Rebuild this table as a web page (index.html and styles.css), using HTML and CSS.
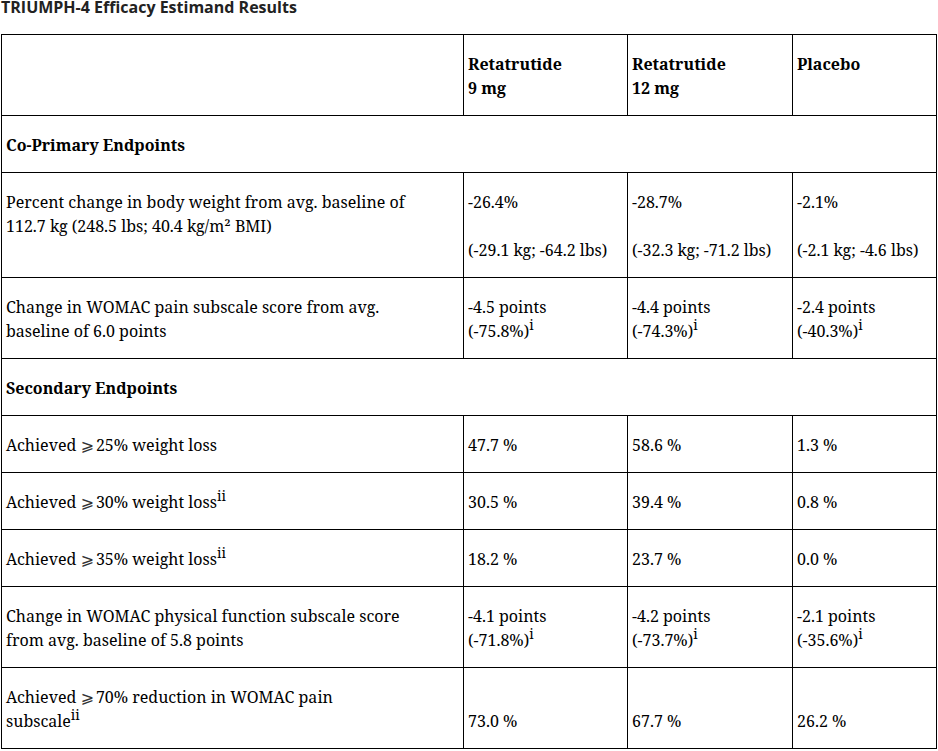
FILE: index.html
```html
<!DOCTYPE html>
<html lang="en">
<head>
<meta charset="utf-8">
<title>TRIUMPH-4 Efficacy Estimand Results</title>
<link rel="stylesheet" href="styles.css">
</head>
<body>
<h1 class="title">TRIUMPH-4 Efficacy Estimand Results</h1>
<div class="tbl" role="table">
  <div class="row head" role="row">
    <div class="cell c1" role="columnheader"></div>
    <div class="cell" role="columnheader">Retatrutide<br>9 mg</div>
    <div class="cell" role="columnheader">Retatrutide<br>12 mg</div>
    <div class="cell" role="columnheader">Placebo</div>
  </div>
  <div class="row section" role="row">
    <div class="cell" role="cell">Co-Primary Endpoints</div>
  </div>
  <div class="row" role="row">
    <div class="cell c1" role="cell">Percent change in body weight from avg. baseline of 112.7 kg (248.5 lbs; 40.4 kg/m² BMI)</div>
    <div class="cell" role="cell">-26.4%<br><br>(-29.1 kg; -64.2 lbs)</div>
    <div class="cell" role="cell">-28.7%<br><br>(-32.3 kg; -71.2 lbs)</div>
    <div class="cell" role="cell">-2.1%<br><br>(-2.1 kg; -4.6 lbs)</div>
  </div>
  <div class="row" role="row">
    <div class="cell c1" role="cell">Change in WOMAC pain subscale score from avg. baseline of 6.0 points</div>
    <div class="cell" role="cell">-4.5 points<br>(-75.8%)<sup>i</sup></div>
    <div class="cell" role="cell">-4.4 points<br>(-74.3%)<sup>i</sup></div>
    <div class="cell" role="cell">-2.4 points<br>(-40.3%)<sup>i</sup></div>
  </div>
  <div class="row section" role="row">
    <div class="cell" role="cell">Secondary Endpoints</div>
  </div>
  <div class="row" role="row">
    <div class="cell c1" role="cell">Achieved <span class="geq">⩾</span>25% weight loss</div>
    <div class="cell" role="cell">47.7 %</div>
    <div class="cell" role="cell">58.6 %</div>
    <div class="cell" role="cell">1.3 %</div>
  </div>
  <div class="row" role="row">
    <div class="cell c1" role="cell">Achieved <span class="geq">⩾</span>30% weight loss<sup>ii</sup></div>
    <div class="cell" role="cell">30.5 %</div>
    <div class="cell" role="cell">39.4 %</div>
    <div class="cell" role="cell">0.8 %</div>
  </div>
  <div class="row" role="row">
    <div class="cell c1" role="cell">Achieved <span class="geq">⩾</span>35% weight loss<sup>ii</sup></div>
    <div class="cell" role="cell">18.2 %</div>
    <div class="cell" role="cell">23.7 %</div>
    <div class="cell" role="cell">0.0 %</div>
  </div>
  <div class="row" role="row">
    <div class="cell c1" role="cell">Change in WOMAC physical function subscale score from avg. baseline of 5.8 points</div>
    <div class="cell" role="cell">-4.1 points<br>(-71.8%)<sup>i</sup></div>
    <div class="cell" role="cell">-4.2 points<br>(-73.7%)<sup>i</sup></div>
    <div class="cell" role="cell">-2.1 points<br>(-35.6%)<sup>i</sup></div>
  </div>
  <div class="row" role="row">
    <div class="cell c1" role="cell">Achieved <span class="geq">⩾</span>70% reduction in WOMAC pain<br>subscale<sup>ii</sup></div>
    <div class="cell bottom" role="cell">73.0 %</div>
    <div class="cell bottom" role="cell">67.7 %</div>
    <div class="cell bottom" role="cell">26.2 %</div>
  </div>
</div>
</body>
</html>
```
FILE: styles.css
```css
* {
  box-sizing: border-box;
}

body {
  margin: 0;
  padding: 0 0 0 1px;
  background: #fff;
  color: #000;
  font-family: "Noto Serif", "DejaVu Serif", serif;
}

.title {
  margin: -4px 0 16px;
  font: 700 16px/22px "Open Sans", "Noto Sans", sans-serif;
  color: #222;
}

.tbl {
  width: 936px;
  border-top: 1px solid #000;
  border-left: 1px solid #000;
}

.row {
  display: grid;
  grid-template-columns: 462px 164px 165px 144px;
}

.cell {
  padding: 17px 4px 15px;
  border-right: 1px solid #000;
  border-bottom: 1px solid #000;
  font-size: 16px;
  line-height: 24px;
}

.c1 {
  padding-right: 42px;
}

.head .cell,
.section .cell {
  font-weight: 700;
}

.section .cell {
  grid-column: 1 / -1;
}

.bottom {
  display: flex;
  flex-direction: column;
  justify-content: flex-end;
}

.geq {
  margin-right: 2px;
  font-family: "DejaVu Sans", sans-serif;
  line-height: 1;
  color: #333;
}

sup {
  font-size: 14px;
  line-height: 0;
  vertical-align: 7px;
}
```
